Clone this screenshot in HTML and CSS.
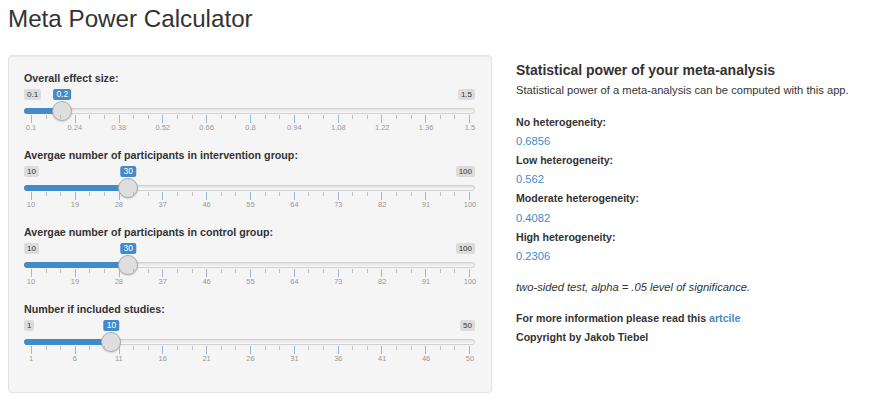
FILE: index.html
```html
<!DOCTYPE html>
<html>
<head>
<meta charset="utf-8">
<title>Meta Power Calculator</title>
<link rel="stylesheet" href="styles.css">
</head>
<body>
<div class="page">
  <h1 class="title">Meta Power Calculator</h1>
  <div class="row">
    <div class="well">
      <div class="field">
        <label class="field-label">Overall effect size:</label>
        <div class="slider">
          <span class="irs-line"></span>
          <span class="irs-bar" style="width:38.3px"></span>
          <span class="irs-min">0.1</span>
          <span class="irs-max">1.5</span>
          <span class="irs-from" style="left:38.3px">0.2</span>
          <span class="irs-handle" style="left:38.3px"></span>
          <div class="irs-grid">
            <span class="gt" style="left:0%">0.1</span>
            <span class="gt" style="left:10%">0.24</span>
            <span class="gt" style="left:20%">0.38</span>
            <span class="gt" style="left:30%">0.52</span>
            <span class="gt" style="left:40%">0.66</span>
            <span class="gt" style="left:50%">0.8</span>
            <span class="gt" style="left:60%">0.94</span>
            <span class="gt" style="left:70%">1.08</span>
            <span class="gt" style="left:80%">1.22</span>
            <span class="gt" style="left:90%">1.36</span>
            <span class="gt" style="left:100%">1.5</span>
          </div>
        </div>
      </div>
      <div class="field">
        <label class="field-label">Avergae number of participants in intervention group:</label>
        <div class="slider">
          <span class="irs-line"></span>
          <span class="irs-bar" style="width:104.3px"></span>
          <span class="irs-min">10</span>
          <span class="irs-max">100</span>
          <span class="irs-from" style="left:104.3px">30</span>
          <span class="irs-handle" style="left:104.3px"></span>
          <div class="irs-grid">
            <span class="gt" style="left:0%">10</span>
            <span class="gt" style="left:10%">19</span>
            <span class="gt" style="left:20%">28</span>
            <span class="gt" style="left:30%">37</span>
            <span class="gt" style="left:40%">46</span>
            <span class="gt" style="left:50%">55</span>
            <span class="gt" style="left:60%">64</span>
            <span class="gt" style="left:70%">73</span>
            <span class="gt" style="left:80%">82</span>
            <span class="gt" style="left:90%">91</span>
            <span class="gt" style="left:100%">100</span>
          </div>
        </div>
      </div>
      <div class="field">
        <label class="field-label">Avergae number of participants in control group:</label>
        <div class="slider">
          <span class="irs-line"></span>
          <span class="irs-bar" style="width:104.3px"></span>
          <span class="irs-min">10</span>
          <span class="irs-max">100</span>
          <span class="irs-from" style="left:104.3px">30</span>
          <span class="irs-handle" style="left:104.3px"></span>
          <div class="irs-grid">
            <span class="gt" style="left:0%">10</span>
            <span class="gt" style="left:10%">19</span>
            <span class="gt" style="left:20%">28</span>
            <span class="gt" style="left:30%">37</span>
            <span class="gt" style="left:40%">46</span>
            <span class="gt" style="left:50%">55</span>
            <span class="gt" style="left:60%">64</span>
            <span class="gt" style="left:70%">73</span>
            <span class="gt" style="left:80%">82</span>
            <span class="gt" style="left:90%">91</span>
            <span class="gt" style="left:100%">100</span>
          </div>
        </div>
      </div>
      <div class="field">
        <label class="field-label">Number if included studies:</label>
        <div class="slider">
          <span class="irs-line"></span>
          <span class="irs-bar" style="width:87.4px"></span>
          <span class="irs-min">1</span>
          <span class="irs-max">50</span>
          <span class="irs-from" style="left:87.4px">10</span>
          <span class="irs-handle" style="left:87.4px"></span>
          <div class="irs-grid">
            <span class="gt" style="left:0%">1</span>
            <span class="gt" style="left:10%">6</span>
            <span class="gt" style="left:20%">11</span>
            <span class="gt" style="left:30%">16</span>
            <span class="gt" style="left:40%">21</span>
            <span class="gt" style="left:50%">26</span>
            <span class="gt" style="left:60%">31</span>
            <span class="gt" style="left:70%">36</span>
            <span class="gt" style="left:80%">41</span>
            <span class="gt" style="left:90%">46</span>
            <span class="gt" style="left:100%">50</span>
          </div>
        </div>
      </div>
    </div>
    <div class="main">
      <h4 class="main-title">Statistical power of your meta-analysis</h4>
      <p class="lead">Statistical power of a meta-analysis can be computed with this app.</p>
      <div class="results">
        <div class="res-label">No heterogeneity:</div>
        <div class="res-val">0.6856</div>
        <div class="res-label">Low heterogeneity:</div>
        <div class="res-val">0.562</div>
        <div class="res-label">Moderate heterogeneity:</div>
        <div class="res-val">0.4082</div>
        <div class="res-label">High heterogeneity:</div>
        <div class="res-val">0.2306</div>
      </div>
      <p class="note">two-sided test, alpha = .05 level of significance.</p>
      <div class="info">For more information please read this <a class="link" href="#">artcile</a></div>
      <div class="info">Copyright by Jakob Tiebel</div>
    </div>
  </div>
</div>
</body>
</html>
```

FILE: styles.css
```css
* { box-sizing: border-box; }

body {
  margin: 0;
  font-family: "Liberation Sans", Arial, sans-serif;
  color: #333;
  background: #fff;
}

.page { padding: 0 8px; }

.title {
  margin: 5px 0 22px;
  font-size: 24.2px;
  line-height: 28px;
  font-weight: normal;
  color: #333;
}

.row {
  display: flex;
  align-items: flex-start;
}

.well {
  width: 484px;
  height: 338px;
  flex: none;
  background: #f5f5f5;
  border: 1px solid #e3e3e3;
  border-radius: 4px;
  box-shadow: inset 0 1px 1px rgba(0, 0, 0, .05);
  padding: 15px 15px 0;
}

.field { height: 77px; }

.field-label {
  display: block;
  font-weight: bold;
  font-size: 10.7px;
  line-height: 14px;
  color: #333;
}

.slider {
  position: relative;
  height: 63px;
}

.irs-line {
  position: absolute;
  left: 0;
  right: 1px;
  top: 23px;
  height: 6px;
  border: 1px solid #cfcfcf;
  border-radius: 6px;
  background: linear-gradient(to bottom, #e2e2e2, #fafafa);
}

.irs-bar {
  position: absolute;
  left: 0;
  top: 23px;
  height: 6px;
  background: #428bca;
  border-radius: 6px 0 0 6px;
}

.irs-min,
.irs-max,
.irs-from {
  position: absolute;
  top: 4px;
  height: 11px;
  padding: 0 3px;
  font-size: 8px;
  line-height: 11px;
  border-radius: 2px;
}

.irs-min,
.irs-max {
  background: #dcdcdc;
  color: #333;
}

.irs-min { left: 0; }
.irs-max { right: 1px; }

.irs-from {
  background: #428bca;
  color: #fff;
  font-size: 8.5px;
  transform: translateX(-50%);
}

.irs-handle {
  position: absolute;
  top: 16px;
  width: 20px;
  height: 20px;
  margin-left: -10px;
  border-radius: 50%;
  border: 1px solid #aaa;
  background: #dedede;
  box-shadow: 0 1px 2px rgba(0, 0, 0, .15);
}

.irs-grid {
  position: absolute;
  left: 7px;
  width: 439px;
  top: 30px;
  height: 20px;
  background:
    repeating-linear-gradient(to right, #93b9dc 0 1px, transparent 1px 43.8px) 0 0 / 100% 8px no-repeat,
    repeating-linear-gradient(to right, #bdbdbd 0 1px, transparent 1px 14.6px) 0 0 / 100% 4px no-repeat;
}

.gt {
  position: absolute;
  top: 8px;
  transform: translateX(-50%);
  font-size: 7.5px;
  line-height: 10px;
  color: #999;
  white-space: nowrap;
}

.main {
  flex: 1;
  margin-left: 24px;
}

.main-title {
  margin: 7px 0 4px;
  font-size: 14px;
  line-height: 16px;
  font-weight: bold;
  color: #333;
}

.lead {
  margin: 0;
  font-size: 11.2px;
  line-height: 16px;
}

.results { margin-top: 14.5px; }

.res-label {
  font-weight: bold;
  font-size: 10.6px;
  line-height: 19.2px;
}

.res-val {
  font-size: 11.2px;
  line-height: 19.2px;
  color: #428bca;
}

.note {
  margin: 11.4px 0 0;
  font-style: italic;
  font-size: 11.2px;
  line-height: 19.2px;
}

.info {
  font-weight: bold;
  font-size: 10.6px;
  line-height: 19.2px;
}

.note + .info { margin-top: 11.8px; }

.link {
  color: #428bca;
  text-decoration: none;
}
```
